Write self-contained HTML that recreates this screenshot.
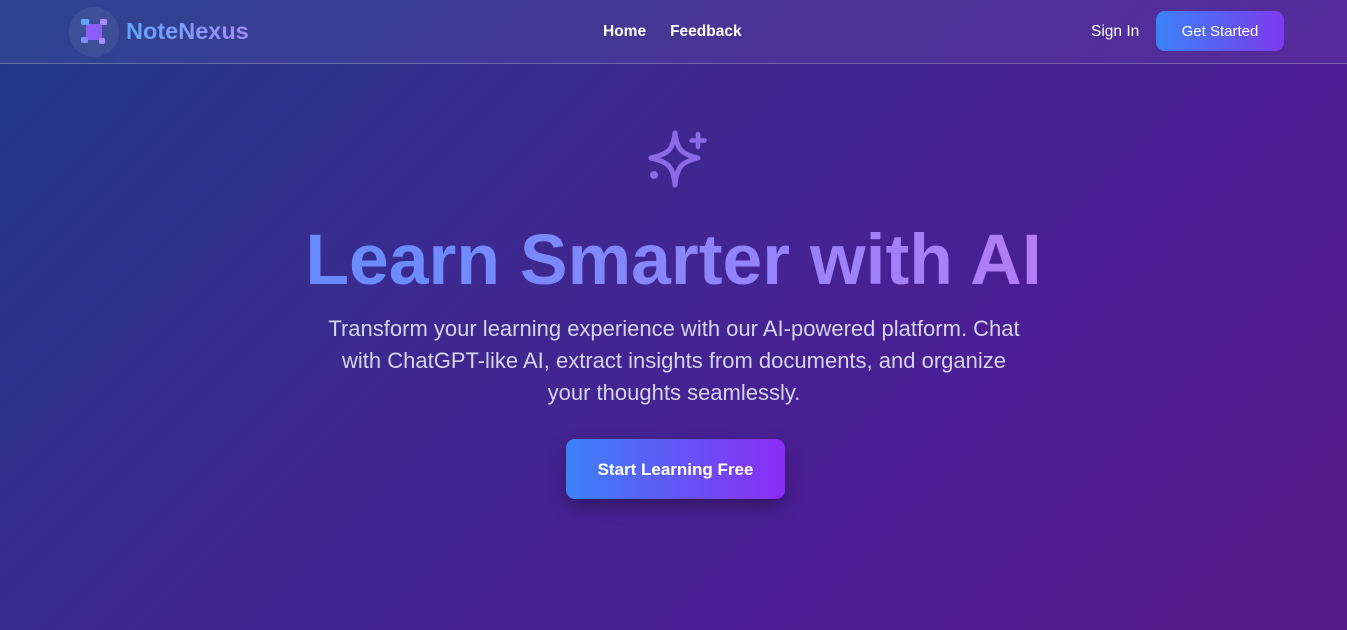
<!DOCTYPE html>
<html><head><meta charset="utf-8"><style>
*{margin:0;padding:0;box-sizing:border-box}
body{width:1347px;height:630px;overflow:hidden;font-family:"Liberation Sans",sans-serif;background:linear-gradient(135deg,#1e3a8a 0%,#3b2a8f 35%,#4c1d95 70%,#581c87 100%);position:relative;color:#fff}
.nav{position:absolute;top:0;left:0;right:0;height:64px;border-bottom:1px solid rgba(255,255,255,.25);background:rgba(255,255,255,.06)}
.logo{position:absolute;left:69px;top:7px;width:50px;height:50px;border-radius:50%;background:rgba(255,255,255,.07)}
.brand{position:absolute;left:126px;top:18px;font-size:23.5px;font-weight:bold;background:linear-gradient(90deg,#60a5fa,#a78bfa);-webkit-background-clip:text;color:transparent}
.links{position:absolute;left:603px;top:23px;font-size:15.5px;font-weight:bold}
.links span{margin-right:24px}
.signin{position:absolute;left:1091px;top:23px;font-size:15.5px}
.gs{position:absolute;left:1156px;top:11px;width:128px;height:40px;border-radius:9px;background:linear-gradient(90deg,#3b82f6,#7c3aed);font-size:15px;text-align:center;line-height:41px}
h1{position:absolute;left:0;right:0;top:219px;text-align:center;font-size:71.5px;font-weight:bold;background:linear-gradient(90deg,#6b8cff 30%,#b07ef5 75%);-webkit-background-clip:text;color:transparent}
p{position:absolute;left:323px;width:702px;top:313px;text-align:center;font-size:22px;line-height:32px;color:#d4d4ee}
.btn{position:absolute;left:566px;top:439px;width:219px;height:60px;border-radius:9px;background:linear-gradient(90deg,#3b82f6,#8b2cf5);font-size:17px;font-weight:bold;text-align:center;line-height:61px;box-shadow:0 8px 18px rgba(0,0,0,.3)}
</style></head><body>
<div class="nav">
<div class="logo"><svg width="50" height="50" viewBox="0 0 50 50"><rect x="17" y="17" width="16" height="16" rx="3" fill="#8b5cf6"/><rect x="12" y="12" width="8" height="6" rx="1.5" fill="#60a5fa"/><rect x="31" y="12" width="7" height="6" rx="1.5" fill="#a78bfa"/><rect x="12" y="30" width="7" height="6" rx="1.5" fill="#818cf8"/><rect x="30" y="31" width="6" height="6" rx="1.5" fill="#a78bfa"/></svg></div>
<div class="brand">NoteNexus</div>
<div class="links"><span>Home</span><span>Feedback</span></div>
<div class="signin">Sign In</div>
<div class="gs">Get Started</div>
</div>
<svg style="position:absolute;left:632px;top:120px" width="90" height="80" viewBox="0 0 90 80"><path d="M43 13 C45 29 49 34 66 38 C49 42 45 47 43 65 C41 47 37 42 19 38 C37 34 41 29 43 13Z" fill="none" stroke="#8b6ae6" stroke-width="5" stroke-linejoin="round"/><path d="M66 14v13M59.5 20.5h13" stroke="#8b6ae6" stroke-width="4.5" stroke-linecap="round"/><circle cx="22" cy="55" r="4" fill="#8b6ae6"/></svg>
<h1>Learn Smarter with AI</h1>
<p>Transform your learning experience with our AI-powered platform. Chat with ChatGPT-like AI, extract insights from documents, and organize your thoughts seamlessly.</p>
<div class="btn">Start Learning Free</div>
</body></html>
